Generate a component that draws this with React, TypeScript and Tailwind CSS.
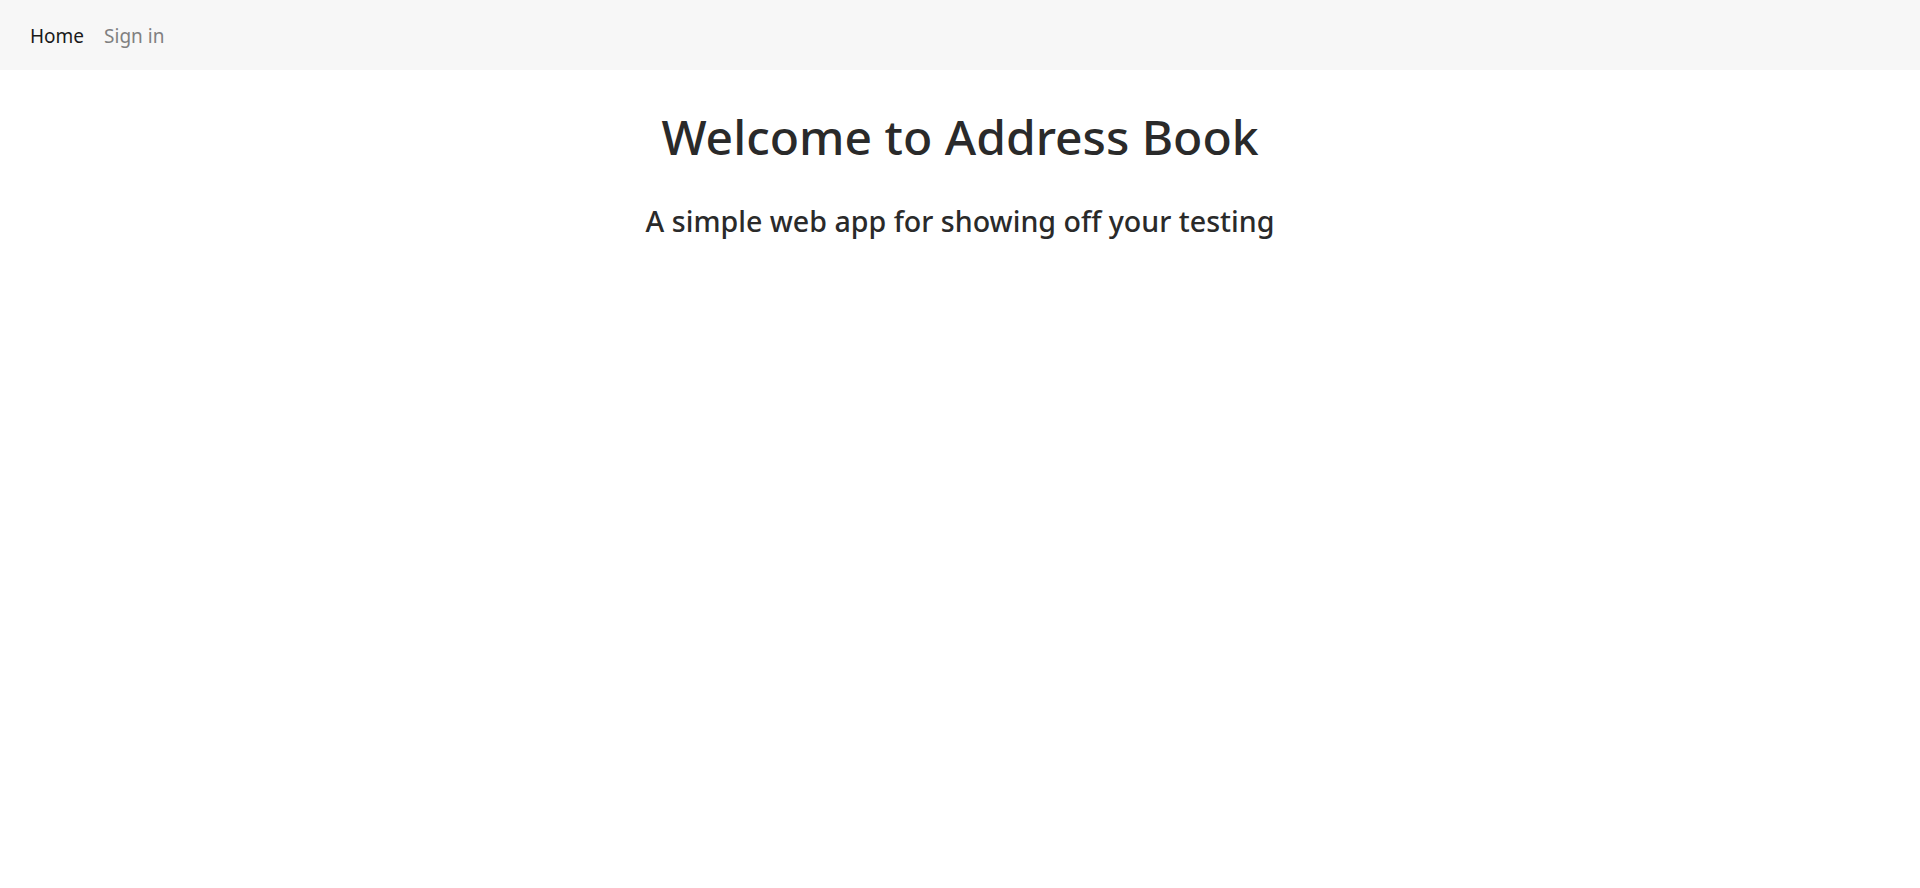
export default function App() {
  return (
    <div className="min-h-screen bg-white" style={{ fontFamily: '"Noto Sans", "Open Sans", sans-serif' }}>
      <nav className="flex h-[70px] items-center bg-[#f7f7f7] px-[20px] pt-[2px]">
        <a href="#" className="px-[10px] text-[19px] text-[#1a1a1a]">
          Home
        </a>
        <a href="#" className="px-[10px] text-[19px] text-[#808080]">
          Sign in
        </a>
      </nav>
      <main className="flex flex-col items-center text-[#2a2a2a]">
        <h1 className="mt-[37px] text-[48px] leading-[60px] font-medium">Welcome to Address Book</h1>
        <h3 className="mt-[36px] text-[28.6px] leading-[36px] font-medium">A simple web app for showing off your testing</h3>
      </main>
    </div>
  );
}
